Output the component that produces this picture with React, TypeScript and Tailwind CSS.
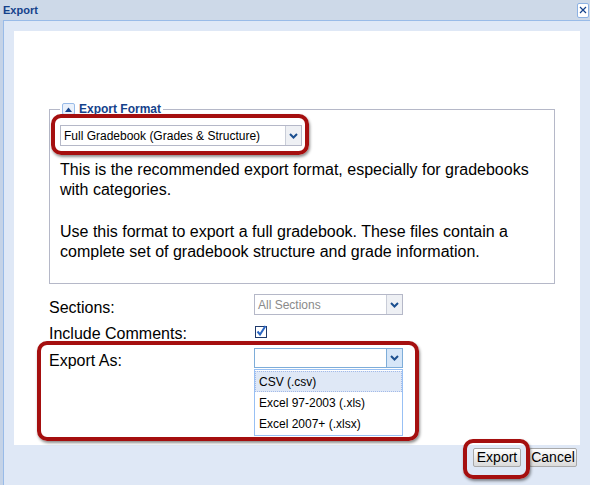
import React from 'react';

const small = { fontFamily: '"Liberation Sans", Arial, sans-serif' };
const body = { fontFamily: '"Liberation Sans", Arial, sans-serif' };

function Chevron() {
  return (
    <svg width="9" height="6" viewBox="0 0 9 6">
      <path d="M1 1 L4.5 4.5 L8 1" fill="none" stroke="#1b4f8f" strokeWidth="2" />
    </svg>
  );
}

function Select({ value, muted, focused, className }: { value: string; muted?: boolean; focused?: boolean; className: string }) {
  return (
    <div
      className={`flex bg-white border ${focused ? 'border-[#7eadd9]' : 'border-[#b5b8c8]'} ${className}`}
      style={small}
    >
      <div className={`flex-1 flex items-center pl-[3px] text-[12px] ${muted ? 'text-[#8a8a8a]' : 'text-black'}`}>{value}</div>
      <div
        className={`w-[16px] flex items-center justify-center border-l ${
          focused ? 'border-[#7eadd9] bg-[#d6e6f8]' : 'border-[#c9cdd8] bg-[#eef0f4]'
        }`}
      >
        <Chevron />
      </div>
    </div>
  );
}

export default function App() {
  return (
    <div className="relative w-[590px] h-[485px] overflow-hidden bg-[#c5d3e7] flex flex-col">
      {/* title bar */}
      <div className="h-[20px] flex items-center justify-between pl-[3px] pr-[1px] bg-[#cdd9e8]">
        <span className="text-[11px] font-bold text-[#15428b]" style={small}>Export</span>
        <div className="w-[12px] h-[15px] bg-white border border-[#8db2e3] rounded-[2px] flex items-center justify-center">
          <svg width="8" height="8" viewBox="0 0 8 8">
            <path d="M1 1 L7 7 M7 1 L1 7" stroke="#15428b" strokeWidth="1.2" />
          </svg>
        </div>
      </div>

      {/* window body */}
      <div className="flex-1 ml-[3px] w-[600px] border-l border-t border-[#99bbe8] bg-[#dfe8f6] pl-[10px] pt-[10px]">
        <div className="w-[566px] h-[414px] bg-white pl-[35px] pt-[71px]">
          <fieldset className="w-[506px] h-[182px] border border-[#b5b8c8] px-[10px]">
            <legend className="px-[2px] h-[14px] flex items-center gap-[4px]">
              <span className="w-[13px] h-[12px] border border-[#99bbe8] bg-[#eaf1fb] rounded-[2px] flex items-center justify-center">
                <svg width="7" height="5" viewBox="0 0 7 5">
                  <path d="M0 5 L3.5 0.5 L7 5 Z" fill="#15428b" />
                </svg>
              </span>
              <span className="text-[12px] font-bold text-[#15428b]" style={small}>Export Format</span>
            </legend>
            <Select value="Full Gradebook (Grades & Structure)" className="mt-[9px] w-[242px] h-[21px]" />
            <div className="text-[16px] leading-[20px] text-black" style={body}>
              <p className="mt-[14px]">
                This is the recommended export format, especially for gradebooks
                <br />
                with categories.
              </p>
              <p className="mt-[22px]">
                Use this format to export a full gradebook. These files contain a
                <br />
                complete set of gradebook structure and grade information.
              </p>
            </div>
          </fieldset>

          <div className="mt-[10px] text-[16px] leading-[20px] text-black" style={body}>
            <div className="flex h-[26px]">
              <div className="w-[205px] pt-[4px]">Sections:</div>
              <Select value="All Sections" muted className="w-[149px] h-[21px]" />
            </div>
            <div className="flex h-[28px]">
              <div className="w-[205px] pt-[4px]">Include Comments:</div>
              <div className="pt-[5px] pl-[1px]">
                <svg width="12" height="13" viewBox="0 0 12 13">
                  <rect x="0.5" y="1.5" width="11" height="11" fill="#fff" stroke="#1f3a6b" />
                  <path d="M2.5 6.5 L5 9.5 L10.5 1" fill="none" stroke="#2a66c2" strokeWidth="2" />
                </svg>
              </div>
            </div>
            <div className="flex h-[20px]">
              <div className="w-[205px] pt-[3px]">Export As:</div>
              <div className="relative">
                <Select value="" focused className="w-[149px] h-[20px]" />
                <div
                  className="absolute left-0 top-[21px] w-[149px] h-[67px] bg-white border border-[#98c0f4] pt-[1px] text-[12px]"
                  style={small}
                >
                  <div className="h-[21px] flex items-center pl-[3px] bg-[#dfe8f6] border border-dotted border-[#a3bae9]">CSV (.csv)</div>
                  <div className="h-[21px] flex items-center pl-[4px]">Excel 97-2003 (.xls)</div>
                  <div className="h-[21px] flex items-center pl-[4px]">Excel 2007+ (.xlsx)</div>
                </div>
              </div>
            </div>
          </div>
        </div>

        <div className="w-[566px] flex justify-end gap-[8px] pr-[3px] pt-[3px]">
          {['Export', 'Cancel'].map((b) => (
            <button
              key={b}
              className="w-[48px] h-[19px] border border-[#a9a9a9] rounded-[2px] bg-gradient-to-b from-white to-[#dadada] text-[14px] leading-[17px] text-black"
              style={body}
            >
              {b}
            </button>
          ))}
        </div>
      </div>

      {/* annotation highlights */}
      <div className="absolute left-[51px] top-[114px] w-[258px] h-[41px] border-[4px] border-[#a50f0f] rounded-[10px] shadow-[1px_2px_3px_rgba(0,0,0,0.45)]" />
      <div className="absolute left-[37px] top-[341px] w-[382px] h-[100px] border-[4px] border-[#a50f0f] rounded-[10px] shadow-[1px_2px_3px_rgba(0,0,0,0.45)]" />
      <div className="absolute left-[463px] top-[439px] w-[67px] h-[40px] border-[4px] border-[#a50f0f] rounded-[10px] shadow-[1px_2px_3px_rgba(0,0,0,0.45)]" />
    </div>
  );
}
